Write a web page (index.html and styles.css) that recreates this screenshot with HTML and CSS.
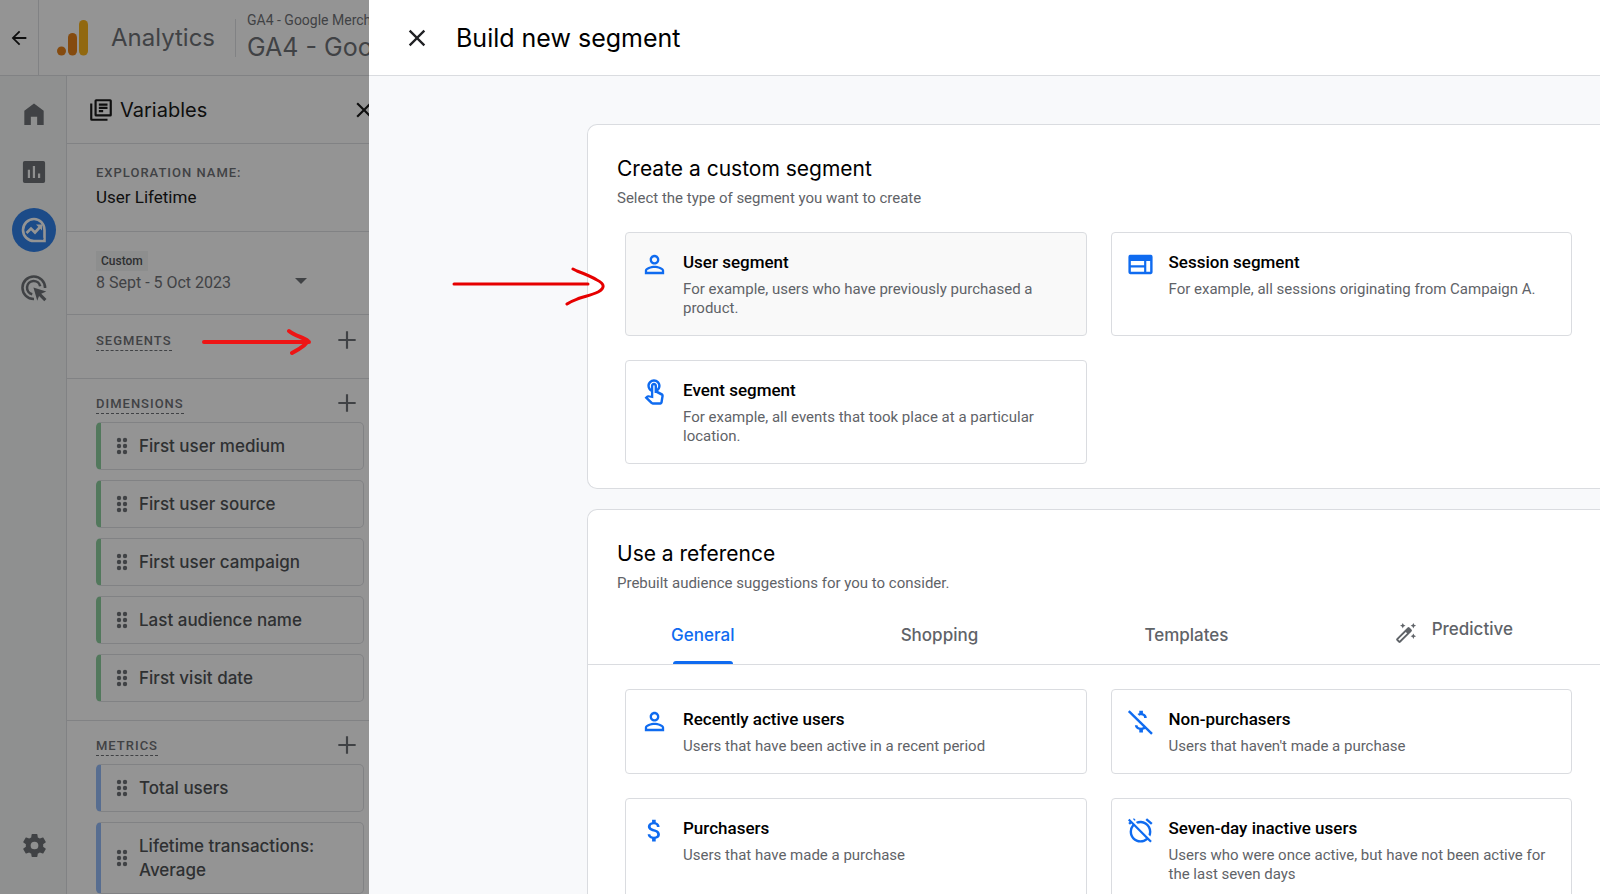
FILE: index.html
```
<!DOCTYPE html>
<html lang="en">
<head>
  <meta charset="UTF-8" />
  <meta name="viewport" content="width=device-width, initial-scale=1" />
  <title>Build new segment - Analytics</title>
  <link rel="stylesheet" href="styles.css">
</head>
<body>
  <!-- shared icons -->
  <svg class="sprite" aria-hidden="true">
    <symbol id="i-plus" viewBox="0 0 24 24"><path d="M11 4h2v7h7v2h-7v7h-2v-7H4v-2h7z"/></symbol>
    <symbol id="i-close" viewBox="0 0 24 24"><path d="M19 6.4 17.6 5 12 10.6 6.4 5 5 6.4l5.6 5.6L5 17.6 6.4 19l5.6-5.6 5.6 5.6 1.4-1.4-5.6-5.6z"/></symbol>
    <symbol id="i-drag" viewBox="0 0 12 18"><circle cx="3" cy="3" r="2.2"/><circle cx="9" cy="3" r="2.2"/><circle cx="3" cy="9" r="2.2"/><circle cx="9" cy="9" r="2.2"/><circle cx="3" cy="15" r="2.2"/><circle cx="9" cy="15" r="2.2"/></symbol>
    <symbol id="i-person" viewBox="0 0 24 24"><path d="M12 5.9c1.16 0 2.1.94 2.1 2.1s-.94 2.1-2.1 2.1S9.9 9.16 9.9 8s.94-2.1 2.1-2.1m0 9c2.97 0 6.1 1.46 6.1 2.1v1.1H5.9V17c0-.64 3.13-2.1 6.1-2.1M12 4C9.79 4 8 5.79 8 8s1.79 4 4 4 4-1.79 4-4-1.79-4-4-4zm0 9c-2.67 0-8 1.34-8 4v3h16v-3c0-2.66-5.33-4-8-4z"/></symbol>
  </svg>

  <div class="app">
    <header class="topbar">
      <button class="back" aria-label="Back">
        <svg width="22" height="22" viewBox="0 0 24 24"><path d="M20 11H7.8l5.6-5.6L12 4l-8 8 8 8 1.400-1.400L7.800 13H20z"/></svg>
      </button>
      <svg class="logo" width="32" height="36" viewBox="0 0 32 36">
        <rect x="22" y="0" width="9" height="35.500" rx="4.500" fill="#f9ab00"/>
        <rect x="11" y="13" width="9" height="22.500" rx="4.500" fill="#e37400"/>
        <circle cx="4.500" cy="31" r="4.500" fill="#e37400"/>
      </svg>
      <span class="product">Analytics</span>
      <div class="account">
        <span class="account-name">GA4 - Google Merch</span>
        <span class="property-name">GA4 - Goo</span>
      </div>
    </header>

    <div class="workspace">
      <nav class="rail">
        <a href="#" class="rail-item" aria-label="Home"><svg width="28" height="28" viewBox="0 0 24 24"><path d="M3.700 21.400V9.300L12 3l8.300 6.300v12.100h-5.600v-7H9.300v7z"/></svg></a>
        <a href="#" class="rail-item" aria-label="Reports"><svg width="28" height="28" viewBox="0 0 24 24"><path d="M20 2.500H4A1.500 1.500 0 0 0 2.500 4v16A1.500 1.500 0 0 0 4 21.500h16a1.500 1.500 0 0 0 1.500-1.500V4A1.500 1.500 0 0 0 20 2.500zM8.600 17.200H6.700V10h1.900zm4.300 0H11V6.800h1.900zm4.400 0h-1.900v-4h1.900z"/></svg></a>
        <a href="#" class="rail-item active" aria-label="Explore">
          <svg width="28" height="28" viewBox="0 0 28 28" fill="none" stroke="#fff"><path fill="none" stroke-width="2.600" d="M14 3a11 11 0 1 0 0 22h10.500V14A10.500 11 0 0 0 14 3z"/><path fill="none" stroke-width="2.600" d="m6.500 17 4.500-4.500 4 4 5.500-6"/><path stroke="none" fill="#fff" d="M16 8.500h6v6z"/><circle cx="22.500" cy="22.500" r="1" fill="#1a73e8" stroke="none"/></svg>
        </a>
        <a href="#" class="rail-item" aria-label="Advertising"><svg width="28" height="28" viewBox="0 0 24 24"><path fill="none" stroke="#5f6368" stroke-width="2.200" d="M12 21.500A9.700 9.700 0 1 1 21.500 12M10.500 17.300A5.700 5.700 0 1 1 17.300 10.500"/><path d="m11.500 11.500 11 3.600-4.300 1.900 4.500 4.500-1.900 1.900-4.500-4.500-1.500 4.100z"/></svg></a>
        <a href="#" class="rail-item settings" aria-label="Admin"><svg width="29" height="29" viewBox="0 0 24 24"><path d="M19.140 12.940c.04-.3.06-.61.06-.94 0-.32-.02-.64-.07-.94l2.030-1.580c.18-.14.23-.41.12-.61l-1.920-3.320c-.12-.22-.37-.29-.59-.22l-2.390.96c-.5-.38-1.030-.7-1.620-.94l-.36-2.540c-.04-.24-.24-.41-.48-.41h-3.840c-.24 0-.43.17-.47.41l-.36 2.540c-.59.24-1.130.57-1.620.94l-2.390-.96c-.22-.08-.47 0-.59.22L2.740 8.870c-.12.21-.08.47.12.61l2.030 1.580c-.05.3-.09.63-.09.94s.02.64.07.94l-2.030 1.580c-.18.14-.23.41-.12.61l1.920 3.320c.12.22.37.29.59.22l2.390-.96c.5.38 1.030.7 1.620.94l.36 2.540c.05.24.24.41.48.41h3.840c.24 0 .44-.17.47-.41l.36-2.540c.59-.24 1.130-.56 1.620-.94l2.390.96c.22.08.47 0 .59-.22l1.920-3.320c.12-.22.07-.47-.12-.61zM12 15.200a3.200 3.200 0 1 1 0-6.400 3.200 3.200 0 0 1 0 6.400z"/></svg></a>
      </nav>

      <aside class="variables">
        <div class="panel-head">
          <svg width="26" height="26" viewBox="0 0 24 24"><path d="M4 6H2v14.500A1.500 1.500 0 0 0 3.500 22H18v-2H4zm16.500-4h-13A1.500 1.500 0 0 0 6 3.500v13A1.500 1.500 0 0 0 7.500 18h13a1.500 1.500 0 0 0 1.500-1.500v-13A1.500 1.500 0 0 0 20.500 2zM20 16H8V4h12zM10 9h8v2h-8zm0 3h4v2h-4zm0-6h8v2h-8z"/></svg>
          <h2>Variables</h2>
          <button class="icon-btn" aria-label="Close variables"><svg width="26" height="26"><use href="#i-close"/></svg></button>
        </div>

        <div class="block exploration">
          <label class="caps" for="explorationName">EXPLORATION NAME:</label>
          <input id="explorationName" value="User Lifetime">
        </div>

        <button class="block dates">
          <span>
            <span class="chip">Custom</span>
            <span class="range">8 Sept - 5 Oct 2023</span>
          </span>
          <svg width="12" height="6" viewBox="0 0 12 6"><path d="M0 0h12L6 6z"/></svg>
        </button>

        <section class="block segments">
          <div class="block-head">
            <h3 class="caps">SEGMENTS</h3>
            <button class="icon-btn" aria-label="Add segment"><svg width="26" height="26"><use href="#i-plus"/></svg></button>
          </div>
        </section>

        <section class="block dimensions">
          <div class="block-head">
            <h3 class="caps">DIMENSIONS</h3>
            <button class="icon-btn" aria-label="Add dimension"><svg width="26" height="26"><use href="#i-plus"/></svg></button>
          </div>
          <ul>
            <li><svg width="12" height="18"><use href="#i-drag"/></svg>First user medium</li>
            <li><svg width="12" height="18"><use href="#i-drag"/></svg>First user source</li>
            <li><svg width="12" height="18"><use href="#i-drag"/></svg>First user campaign</li>
            <li><svg width="12" height="18"><use href="#i-drag"/></svg>Last audience name</li>
            <li><svg width="12" height="18"><use href="#i-drag"/></svg>First visit date</li>
          </ul>
        </section>

        <section class="block metrics">
          <div class="block-head">
            <h3 class="caps">METRICS</h3>
            <button class="icon-btn" aria-label="Add metric"><svg width="26" height="26"><use href="#i-plus"/></svg></button>
          </div>
          <ul>
            <li><svg width="12" height="18"><use href="#i-drag"/></svg>Total users</li>
            <li><svg width="12" height="18"><use href="#i-drag"/></svg>Lifetime transactions: Average</li>
          </ul>
        </section>
      </aside>
    </div>
    <div class="scrim"></div>
  </div>

  <main class="drawer">
    <header class="drawer-head">
      <button class="icon-btn" aria-label="Close"><svg width="28" height="28"><use href="#i-close"/></svg></button>
      <h1>Build new segment</h1>
    </header>

    <div class="drawer-body">
      <section class="sheet">
        <h2>Create a custom segment</h2>
        <p class="sub">Select the type of segment you want to create</p>
        <div class="cards">
          <button class="card hovered">
            <svg width="29" height="29"><use href="#i-person"/></svg>
            <span class="card-text"><strong>User segment</strong><span>For example, users who have previously purchased a product.</span></span>
          </button>
          <button class="card">
            <svg width="29" height="29" viewBox="0 0 24 24"><path d="M20.500 4h-17A1.500 1.500 0 0 0 2 5.500v13A1.500 1.500 0 0 0 3.500 20h17a1.500 1.500 0 0 0 1.500-1.500v-13A1.500 1.500 0 0 0 20.500 4zM15 18H4v-3.500h11zm0-5.300H4V9.200h11zm5 5.300h-3.200V9.200H20z"/></svg>
            <span class="card-text"><strong>Session segment</strong><span>For example, all sessions originating from Campaign A.</span></span>
          </button>
          <button class="card">
            <svg width="29" height="29" viewBox="0 0 24 24"><path d="M18.190 12.440l-3.240-1.620c1.290-1 2.120-2.560 2.120-4.320C17.070 3.460 14.610 1 11.570 1S6.070 3.460 6.070 6.500c0 2.130 1.210 3.980 3 4.890v3.260l-1.970-.41c-.68-.14-1.400.07-1.890.56L3.770 16.300l5.090 5.090c.43.43 1.030.68 1.640.68h6.300c1 0 1.860-.73 2.010-1.720l.83-5.350c.16-1.050-.38-2.080-1.450-2.560zM17.700 14.600l-.9 5.470h-6.300l-3.800-3.800.3-.3 4 .8V6.500c0-.28.22-.5.57-.5.28 0 .5.22.5.5v6h1.300zM8.070 6.500c0-1.930 1.570-3.500 3.500-3.500s3.500 1.570 3.500 3.500c0 .95-.38 1.810-1 2.440V6.500c0-1.380-1.120-2.500-2.500-2.500s-2.500 1.120-2.500 2.500v2.440c-.62-.63-1-1.490-1-2.440z"/></svg>
            <span class="card-text"><strong>Event segment</strong><span>For example, all events that took place at a particular location.</span></span>
          </button>
        </div>
      </section>

      <section class="sheet">
        <h2>Use a reference</h2>
        <p class="sub">Prebuilt audience suggestions for you to consider.</p>
        <div class="tabs" role="tablist">
          <button class="tab selected" role="tab" aria-selected="true">General</button>
          <button class="tab" role="tab">Shopping</button>
          <button class="tab" role="tab">Templates</button>
          <button class="tab predictive" role="tab">
            <svg width="22" height="22" viewBox="0 0 24 24"><path d="m20 7 .94-2.060L23 4l-2.060-.94L20 1l-.94 2.060L17 4l2.060.94zM8.500 7l.94-2.060L11.500 4l-2.060-.94L8.500 1l-.94 2.060L5.500 4l2.060.94zM20 12.500l-.94 2.060-2.060.94 2.060.94.94 2.060.94-2.060L23 15.500l-2.060-.94z"/><path fill-rule="evenodd" d="M18 8.200 15.800 6a1.500 1.500 0 0 0-2.100 0L1.700 18a1.500 1.500 0 0 0 0 2.100l2.200 2.200a1.500 1.500 0 0 0 2.100 0L18 10.300a1.500 1.500 0 0 0 0-2.100zM4.900 20.500l-1.400-1.400 8.300-8.300 1.400 1.400z"/></svg>
            Predictive
          </button>
        </div>
        <div class="cards">
          <button class="card">
            <svg width="29" height="29"><use href="#i-person"/></svg>
            <span class="card-text"><strong>Recently active users</strong><span>Users that have been active in a recent period</span></span>
          </button>
          <button class="card">
            <svg width="29" height="29" viewBox="0 0 24 24"><path d="M12.500 6.900c1.780 0 2.440.85 2.500 2.100h2.210c-.07-1.720-1.120-3.300-3.210-3.810V3h-3v2.160c-.53.12-1.030.3-1.480.54l1.470 1.470c.41-.17.910-.27 1.510-.27z"/><path d="M12.500 17.100c-2.060 0-2.870-.92-2.980-2.100h-2.200c.12 2.190 1.760 3.420 3.680 3.830V21h3v-2.150c.96-.18 1.830-.55 2.460-1.120l-1.500-1.500c-.5.520-1.320.870-2.460.870z"/><path d="M3 2.700 1.600 4.100 20.800 23l1.400-1.400z"/></svg>
            <span class="card-text"><strong>Non-purchasers</strong><span>Users that haven't made a purchase</span></span>
          </button>
          <button class="card">
            <svg width="29" height="29" viewBox="0 0 24 24"><path d="M11.800 10.900c-2.270-.59-3-1.200-3-2.150 0-1.090 1.010-1.850 2.700-1.850 1.780 0 2.440.85 2.500 2.100h2.210c-.07-1.720-1.120-3.300-3.210-3.810V3h-3v2.160c-1.940.42-3.500 1.680-3.500 3.610 0 2.310 1.910 3.460 4.700 4.130 2.500.6 3 1.480 3 2.410 0 .69-.49 1.790-2.700 1.790-2.060 0-2.870-.92-2.980-2.100h-2.200c.12 2.190 1.760 3.420 3.680 3.830V21h3v-2.150c1.950-.37 3.500-1.500 3.500-3.550 0-2.840-2.430-3.810-4.700-4.400z"/></svg>
            <span class="card-text"><strong>Purchasers</strong><span>Users that have made a purchase</span></span>
          </button>
          <button class="card">
            <svg width="29" height="29" viewBox="0 0 24 24"><path d="M12 6c3.870 0 7 3.130 7 7 0 .84-.16 1.650-.43 2.400l1.520 1.520c.58-1.190.91-2.510.91-3.920a9 9 0 0 0-12.920-8.090l1.520 1.520C10.350 6.160 11.160 6 12 6zm10-.28-4.600-3.860-1.290 1.530 4.600 3.860zM2.920 2.290 1.650 3.570 2.980 4.900l-1.110.93 1.420 1.420 1.110-.94.8.8A8.960 8.960 0 0 0 3 13c0 4.970 4.020 9 9 9 2.250 0 4.310-.83 5.890-2.200l2.200 2.200 1.270-1.270zm13.550 16.100C15.260 19.390 13.700 20 12 20c-3.870 0-7-3.130-7-7 0-1.700.61-3.260 1.610-4.470zM8.020 3.280 6.600 1.860l-.86.71 1.420 1.420z"/></svg>
            <span class="card-text"><strong>Seven-day inactive users</strong><span>Users who were once active, but have not been active for the last seven days</span></span>
          </button>
        </div>
      </section>
    </div>
  </main>

  <!-- hand-drawn arrows -->
  <svg class="arrow arrow-add" width="112" height="30" viewBox="0 0 112 30"><path d="M4 15h105M89 4c6 5 14 6 19 10-3 4-5 6-9 8l-7 4"/></svg>
  <svg class="arrow arrow-user" width="156" height="42" viewBox="0 0 156 42"><path d="M3 20h134M122 5l4 2c8 3 15 6 20 9 8 4 8 8 1 12-6 3-12 4-18 6-5 2-9 3-13 6"/></svg>
</body>
</html>
```
FILE: styles.css
```
* {
  box-sizing: border-box;
}

body {
  margin: 0;
  height: 100vh;
  display: flex;
  overflow: hidden;
  position: relative;
  font-family: Roboto, "Liberation Sans", sans-serif;
  color: #000;
  background: #fff;
}

h1, h2, h3, p, ul {
  margin: 0;
  padding: 0;
  font-weight: 400;
}

h1, h2, .product, .property-name, .tab, li {
  font-family: Inter, Roboto, sans-serif;
}

button, input {
  font: inherit;
  color: inherit;
  background: none;
  border: none;
  padding: 0;
  text-align: left;
}

button {
  cursor: pointer;
}

svg {
  display: block;
  flex: none;
  fill: currentColor;
}

.sprite {
  position: absolute;
  width: 0;
  height: 0;
}

/* dimmed app behind the drawer */
.app {
  flex: none;
  width: 369px;
  position: relative;
  display: flex;
  flex-direction: column;
  overflow: hidden;
}

.scrim {
  position: absolute;
  inset: 0;
  background: rgba(32, 32, 32, 0.48);
}

.topbar {
  flex: none;
  height: 76px;
  display: flex;
  align-items: center;
  border-bottom: 1px solid #dadce0;
  color: #5f6368;
  white-space: nowrap;
}

.back {
  align-self: stretch;
  width: 39px;
  display: flex;
  align-items: center;
  justify-content: center;
  border-right: 1px solid #dadce0;
  color: #000;
}

.logo {
  margin: 0 22px 0 18px;
}

.product {
  font-size: 24px;
}

.account {
  margin-left: auto;
  flex: none;
  width: 134px;
  height: 38px;
  padding: 0 0 6px 11px;
  border-left: 1px solid #dadce0;
  display: flex;
  flex-direction: column;
  justify-content: center;
}

.account-name {
  font-size: 14px;
  line-height: 24px;
}

.property-name {
  font-size: 25px;
  line-height: 30px;
}

.workspace {
  flex: 1;
  min-height: 0;
  display: flex;
}

.rail {
  flex: none;
  width: 67px;
  padding: 16px 0 27px 2px;
  display: flex;
  flex-direction: column;
  align-items: center;
  gap: 14px;
  background: #f5f8f7;
  border-right: 1px solid #dadce0;
  color: #5f6368;
}

.rail-item {
  width: 44px;
  height: 44px;
  display: flex;
  align-items: center;
  justify-content: center;
  border-radius: 50%;
  color: inherit;
}

.rail-item.active {
  background: #1a73e8;
}

.rail-item.settings {
  margin-top: auto;
}

.variables {
  flex: none;
  width: 318px;
}

.panel-head {
  height: 68px;
  display: flex;
  align-items: center;
  gap: 6px;
  padding: 0 8px 0 21px;
  border-bottom: 1px solid #dadce0;
}

.panel-head h2 {
  font-size: 20px;
}

.panel-head .icon-btn {
  margin-left: auto;
}

.block {
  padding-left: 29px;
  border-bottom: 1px solid #dadce0;
}

.caps {
  font-size: 13px;
  line-height: 18px;
  font-weight: 500;
  letter-spacing: 1px;
  color: #5f6368;
}

.exploration {
  height: 88px;
  padding-top: 20px;
  display: flex;
  flex-direction: column;
}

.exploration input {
  width: 240px;
  font-size: 17px;
  line-height: 30px;
}

.dates {
  width: 100%;
  height: 83px;
  padding-right: 78px;
  display: flex;
  align-items: center;
  justify-content: space-between;
  color: #5f6368;
}

.dates svg {
  margin-top: 16px;
}

.chip {
  display: table;
  padding: 0 5px;
  font-size: 12px;
  line-height: 20px;
  font-weight: 500;
  color: #3c4043;
  background: #f1f3f4;
}

.range {
  font-size: 16px;
  line-height: 24px;
}

.block-head {
  display: flex;
  align-items: center;
  justify-content: space-between;
  padding-right: 25px;
  color: #5f6368;
}

.block-head .caps {
  margin-top: 2px;
  border-bottom: 1px dashed #5f6368;
}

.segments {
  height: 64px;
  padding-top: 12px;
}

.dimensions {
  padding-top: 11px;
  padding-bottom: 18px;
}

.metrics {
  padding-top: 11px;
}

ul {
  list-style: none;
  width: 268px;
  margin-top: 6px;
  display: flex;
  flex-direction: column;
  gap: 10px;
}

li {
  min-height: 48px;
  padding: 11px 16px 11px 15px;
  display: flex;
  align-items: center;
  gap: 11px;
  font-size: 17px;
  line-height: 24px;
  font-weight: 500;
  color: #3c4043;
  border: 1px solid #dadce0;
  border-left: 5px solid #81c995;
  border-radius: 5px;
}

.metrics li {
  border-left-color: #8ab4f8;
}

li svg {
  color: #5f6368;
}

/* drawer */
.drawer {
  flex: 1;
  min-width: 0;
  display: flex;
  flex-direction: column;
  background: #f8f9fb;
}

.drawer-head {
  flex: none;
  height: 76px;
  padding-left: 34px;
  display: flex;
  align-items: center;
  gap: 25px;
  background: #fff;
  border-bottom: 1px solid #dadce0;
}

.drawer-head h1 {
  font-size: 25px;
}

.drawer-head svg {
  color: #202124;
}

.drawer-body {
  flex: 1;
  min-height: 0;
  overflow: hidden;
  padding: 48px 0 0 218px;
}

.sheet {
  margin-bottom: 20px;
  padding: 29px 0 24px;
  background: #fff;
  border: 1px solid #dadce0;
  border-right: none;
  border-radius: 10px 0 0 10px;
}

.sheet h2 {
  padding-left: 29px;
  font-size: 21px;
  line-height: 30px;
}

.sub {
  padding-left: 29px;
  font-size: 15px;
  line-height: 28px;
  color: #5f6368;
}

.cards {
  display: grid;
  grid-template-columns: 1fr 1fr;
  gap: 24px;
  margin-top: 20px;
  padding: 0 28px 0 37px;
}

.card {
  display: flex;
  align-items: flex-start;
  gap: 14px;
  padding: 17px 16px 17px 14px;
  border: 1px solid #dadce0;
  border-radius: 4px;
  color: #0f6bf0;
}

.card.hovered {
  background: #f9f9f9;
}

.card-text {
  display: flex;
  flex-direction: column;
  gap: 8px;
  padding-top: 2px;
  font-size: 15px;
  line-height: 19px;
  color: #5f6368;
}

.card-text strong {
  font-size: 17px;
  line-height: 20px;
  font-weight: 500;
  color: #000;
}

.tabs {
  display: flex;
  height: 68px;
  border-bottom: 1px solid #dadce0;
}

.tab {
  flex: 1 1 auto;
  position: relative;
  display: flex;
  align-items: center;
  justify-content: center;
  padding-top: 8px;
  font-size: 17px;
  font-weight: 500;
  color: #5f6368;
}

.tab.selected {
  color: #0f6bf0;
}

.tab.selected::after {
  content: "";
  position: absolute;
  bottom: 0;
  width: 60px;
  height: 3px;
  border-radius: 3px 3px 0 0;
  background: #0f6bf0;
}

.tab.predictive {
  gap: 15px;
  padding: 0 4px 4px 0;
}

.predictive svg {
  margin-top: 8px;
}

.tabs + .cards {
  margin-top: 24px;
}

/* arrows drawn over the page */
.arrow {
  position: absolute;
  fill: none;
  stroke: #ee1515;
  stroke-width: 4;
  stroke-linecap: round;
  stroke-linejoin: round;
}

.arrow-add {
  left: 200px;
  top: 327px;
}

.arrow-user {
  left: 451px;
  top: 264px;
  stroke: #e60000;
  stroke-width: 3;
}
```
